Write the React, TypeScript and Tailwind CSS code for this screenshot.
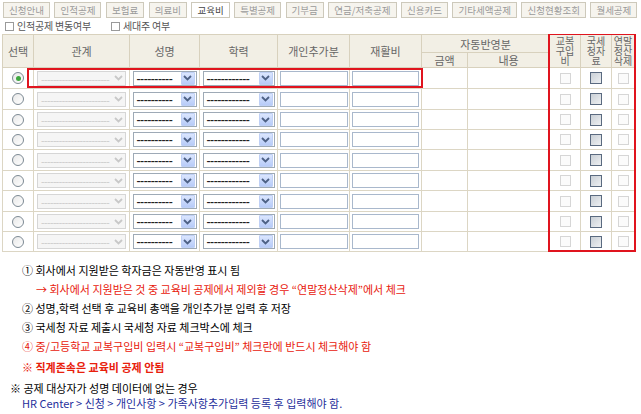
import React from "react";

const tabs = [
  "신청안내",
  "인적공제",
  "보험료",
  "의료비",
  "교육비",
  "특별공제",
  "기부금",
  "연금/저축공제",
  "신용카드",
  "기타세액공제",
  "신청현황조회",
  "월세공제",
];

const rowHeights = [21, 21, 20, 20, 21, 20, 21, 20, 20, 20];

function Chevron({ color }: { color: string }) {
  return (
    <svg width="9" height="6" viewBox="0 0 9 6">
      <path d="M1 1 L4.5 4.5 L8 1" stroke={color} strokeWidth="1.8" fill="none" />
    </svg>
  );
}

function Sel({ w, disabled, text }: { w: string; disabled?: boolean; text: string }) {
  if (disabled) {
    return (
      <div className={`${w} h-[15px] flex items-center border border-[#d6d6d6] bg-[#f5f5f5]`}>
        <span className="flex-1 pl-[3px] text-[10px] leading-[13px] text-[#c6c6c6] overflow-hidden whitespace-nowrap tracking-[-0.5px]">
          {text}
        </span>
        <div className="w-[14px] h-[13px] flex items-center justify-center">
          <Chevron color="#c8c8c8" />
        </div>
      </div>
    );
  }
  return (
    <div className={`${w} h-[15px] flex items-center border border-[#9eaab6] bg-white`}>
      <span className="flex-1 pl-[3px] text-[11px] leading-[13px] text-[#222] overflow-hidden whitespace-nowrap font-bold tracking-[-0.5px]">
        {text}
      </span>
      <div className="w-[14px] h-[13px] mr-[1px] flex items-center justify-center bg-gradient-to-b from-[#dbe6fe] to-[#b7cbf8] border border-[#bfd0f5] rounded-[1px]">
        <Chevron color="#4d6185" />
      </div>
    </div>
  );
}

function Input({ w }: { w: string }) {
  return <div className={`${w} h-[15px] border border-[#a9b8cc] bg-white`} />;
}

function Radio({ on }: { on?: boolean }) {
  return (
    <div className="w-[12px] h-[12px] rounded-full border border-[#7d8a94] bg-gradient-to-br from-[#e8e8e8] to-white flex items-center justify-center">
      {on && <div className="w-[5px] h-[5px] rounded-full bg-[#3fa83f]" />}
    </div>
  );
}

function Check({ dark }: { dark?: boolean }) {
  if (dark) {
    return <div className="w-[12px] h-[12px] border border-[#5a6a80] bg-gradient-to-br from-[#c9cfd6] to-[#eef0f2]" />;
  }
  return <div className="w-[11px] h-[11px] border border-[#d6d6d6] bg-[#fbfbfb]" />;
}

export default function App() {
  const th = "border border-[#d8d1bd] bg-[#f2efe5] text-[#666] font-normal text-[11px] leading-[12px] p-0";
  const th3 = "border border-[#d8d1bd] bg-[#f2efe5] text-[#666] font-normal text-[10px] leading-[10px] p-0 align-top pt-[1px]";
  const td = "border border-[#dcd6c4] p-0";
  return (
    <div
      className="w-[641px] h-[414px] bg-white overflow-hidden"
      style={{ fontFamily: '"Noto Sans CJK KR", "Noto Sans", sans-serif' }}
    >
      {/* tabs */}
      <div className="flex items-start gap-[4.5px] pl-[3px] pt-[2px] h-[18px]">
        {tabs.map((t) => {
          const active = t === "교육비";
          return (
            <div
              key={t}
              className={`h-[16px] px-[5px] border border-[#cdc9bb] text-[9.5px] leading-[14px] whitespace-nowrap ${
                active ? "bg-white text-[#444]" : "bg-[#f6f4ee] text-[#9a9a9a]"
              }`}
            >
              {t}
            </div>
          );
        })}
      </div>

      {/* option checks */}
      <div className="flex items-center h-[14px] mt-[1px] pl-[5px] text-[10px] text-[#555] tracking-[-0.2px]">
        <div className="w-[9px] h-[9px] border border-[#9a9a9a] bg-white" />
        <span className="ml-[3px] leading-[14px]">인적공제 변동여부</span>
        <div className="w-[9px] h-[9px] border border-[#9a9a9a] bg-white ml-[20px]" />
        <span className="ml-[3px] leading-[14px]">세대주 여부</span>
      </div>

      {/* table */}
      <div className="relative mt-[1px] ml-[2px] h-[218px] overflow-hidden w-[636px]">
        <table className="table-fixed border-collapse w-[632px]">
          <colgroup>
            <col className="w-[31px]" />
            <col className="w-[96px]" />
            <col className="w-[70px]" />
            <col className="w-[78px]" />
            <col className="w-[72px]" />
            <col className="w-[72px]" />
            <col className="w-[46px]" />
            <col className="w-[82px]" />
            <col className="w-[31px]" />
            <col className="w-[31px]" />
            <col className="w-[23px]" />
          </colgroup>
          <thead>
            <tr className="h-[18px]">
              <th rowSpan={2} className={th}>선택</th>
              <th rowSpan={2} className={th}>관계</th>
              <th rowSpan={2} className={th}>성명</th>
              <th rowSpan={2} className={th}>학력</th>
              <th rowSpan={2} className={th}>개인추가분</th>
              <th rowSpan={2} className={th}>재활비</th>
              <th colSpan={2} className={th}>자동반영분</th>
              <th rowSpan={2} className={th3}>교복<br />구입<br />비</th>
              <th rowSpan={2} className={th3}>국세<br />청자<br />료</th>
              <th rowSpan={2} className={th3}>연말<br />정산<br />삭제</th>
            </tr>
            <tr className="h-[15px]">
              <th className={th}>금액</th>
              <th className={th}>내용</th>
            </tr>
          </thead>
          <tbody>
            {rowHeights.map((h, i) => (
              <tr key={i} style={{ height: h }}>
                <td className={td}>
                  <div className="flex justify-center"><Radio on={i === 0} /></div>
                </td>
                <td className={td}>
                  <div className="flex justify-center"><Sel w="w-[89px]" disabled text="-----------------------" /></div>
                </td>
                <td className={td}>
                  <div className="flex justify-center"><Sel w="w-[64px]" text="----------" /></div>
                </td>
                <td className={td}>
                  <div className="flex justify-center"><Sel w="w-[72px]" text="------------" /></div>
                </td>
                <td className={td}>
                  <div className="flex justify-center"><Input w="w-[68px]" /></div>
                </td>
                <td className={td}>
                  <div className="flex justify-center"><Input w="w-[67px]" /></div>
                </td>
                <td className={td}></td>
                <td className={td}></td>
                <td className={td}>
                  <div className="flex justify-center"><Check /></div>
                </td>
                <td className={td}>
                  <div className="flex justify-center"><Check dark /></div>
                </td>
                <td className={td}>
                  <div className="flex justify-center"><Check /></div>
                </td>
              </tr>
            ))}
          </tbody>
        </table>
        {/* highlight boxes */}
        <div className="absolute left-[25px] top-[34px] w-[396px] h-[20px] border-2 border-[#e0141e]" />
        <div className="absolute left-[546px] top-[-1px] w-[88px] h-[219px] border-2 border-[#e0141e]" />
      </div>

      {/* notes */}
      <div className="mt-[9px] text-[11px] leading-[19px] text-black">
        <div className="pl-[22px]">① 회사에서 지원받은 학자금은 자동반영 표시 됨</div>
        <div className="pl-[36px] text-[#e8200c]">→ 회사에서 지원받은 것 중 교육비 공제에서 제외할 경우 “연말정산삭제”에서 체크</div>
        <div className="pl-[22px]">② 성명,학력 선택 후 교육비 총액을 개인추가분 입력 후 저장</div>
        <div className="pl-[22px]">③ 국세청 자료 제출시 국세청 자료 체크박스에 체크</div>
        <div className="pl-[22px] text-[#e8200c]">④ 중/고등학교 교복구입비 입력시 “교복구입비” 체크란에 반드시 체크해야 함</div>
        <div className="pl-[22px] text-[#e8200c] font-bold mt-[2px]">※ 직계존속은 교육비 공제 안됨</div>
        <div className="pl-[10px] mt-[2px]">※ 공제 대상자가 성명 데이터에 없는 경우</div>
        <div className="pl-[22px] text-[#1f2f9c] leading-[11px]">HR Center &gt; 신청 &gt; 개인사항 &gt; 가족사항추가입력 등록 후 입력해야 함.</div>
      </div>
    </div>
  );
}
